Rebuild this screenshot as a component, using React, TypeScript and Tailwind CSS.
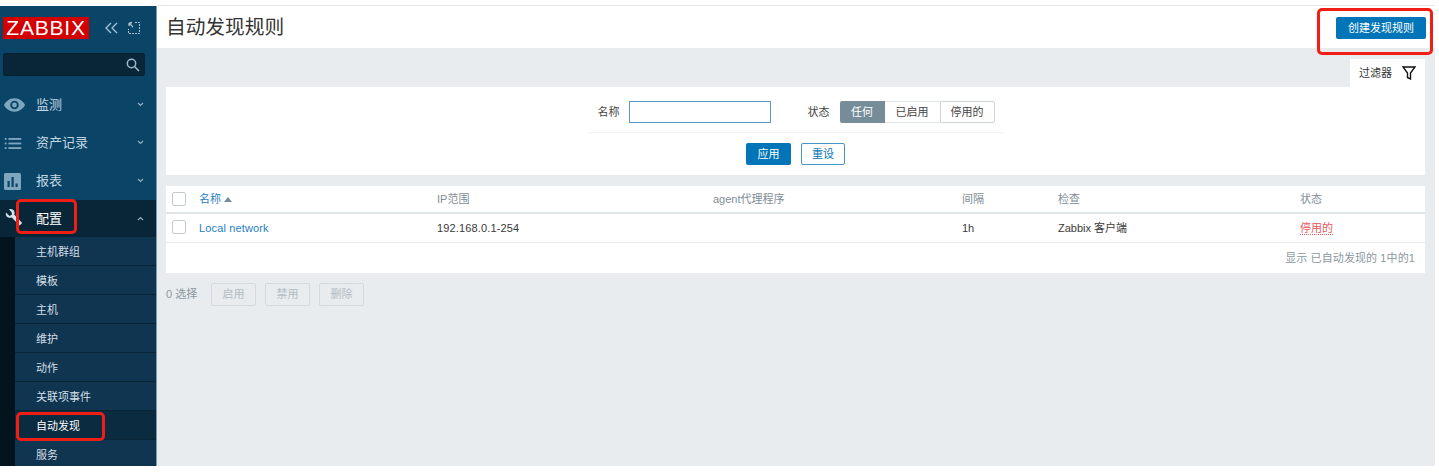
import React from "react";

const FONT = "font-['Liberation_Sans','Noto_Sans_CJK_SC',sans-serif]";

const topMenu = [
  { label: "监测", icon: "eye" },
  { label: "资产记录", icon: "list" },
  { label: "报表", icon: "chart" },
];

const subMenu = ["主机群组", "模板", "主机", "维护", "动作", "关联项事件", "自动发现", "服务"];

function MenuIcon({ name }: { name: string }) {
  if (name === "eye") {
    return (
      <svg width="21" height="14" viewBox="0 0 22 14" fill="#7fa6bf">
        <path d="M11 0C6 0 2 3 0 7c2 4 6 7 11 7s9-3 11-7c-2-4-6-7-11-7zm0 11.5A4.5 4.5 0 1 1 11 2.5a4.5 4.5 0 0 1 0 9z" />
        <circle cx="11" cy="7" r="2.5" />
      </svg>
    );
  }
  if (name === "list") {
    return (
      <svg width="18" height="11" viewBox="0 0 18 12" fill="#7fa6bf">
        <rect x="0" y="0" width="2" height="2" />
        <rect x="4" y="0" width="14" height="2" />
        <rect x="0" y="5" width="2" height="2" />
        <rect x="4" y="5" width="14" height="2" />
        <rect x="0" y="10" width="2" height="2" />
        <rect x="4" y="10" width="14" height="2" />
      </svg>
    );
  }
  return (
    <svg width="17" height="17" viewBox="0 0 17 17">
      <rect width="17" height="17" rx="1.5" fill="#7fa6bf" />
      <rect x="3.5" y="8" width="2.2" height="6" fill="#0a4568" />
      <rect x="7.5" y="4" width="2.2" height="10" fill="#0a4568" />
      <rect x="11.5" y="10.5" width="2.2" height="3.5" fill="#0a4568" />
    </svg>
  );
}

function Chevron({ up }: { up?: boolean }) {
  return (
    <svg width="7" height="5" viewBox="0 0 7 5" fill="none" stroke="#8fb0c6" strokeWidth="1.2">
      <path d={up ? "M1 4l2.5-2.5L6 4" : "M1 1l2.5 2.5L6 1"} />
    </svg>
  );
}

function Sidebar() {
  return (
    <aside className="w-[157px] mt-[1px] shrink-0 bg-[#0a4568] border-r border-[#7d99ad] flex flex-col overflow-hidden">
      <div className="h-[47px] shrink-0 flex items-center pl-[3px] pb-[3px]">
        <div className="w-[86px] h-[22px] bg-[#d40000] text-white text-[21px] leading-[22px] text-center tracking-[0.8px]">
          ZABBIX
        </div>
        <svg className="ml-[16px]" width="13" height="12" viewBox="0 0 13 12" fill="none" stroke="#a9c3d4" strokeWidth="1.3">
          <path d="M6 1L1 6l5 5M12 1L7 6l5 5" />
        </svg>
        <svg className="ml-[10px]" width="12" height="12" viewBox="0 0 12 12" fill="none" stroke="#a9c3d4">
          <path d="M4 .5H1l0 0M7 .5h4.5V11.5H.5V7" strokeDasharray="2 1" />
          <path d="M1 1l4 4M1 1v3M1 1h3" strokeWidth="1.2" />
        </svg>
      </div>
      <div className="mx-[3px] h-[23px] w-[142px] shrink-0 bg-[#082638] rounded-[2px] border border-[#06202f] flex items-center justify-end pr-[4px]">
        <svg width="14" height="14" viewBox="0 0 14 14" fill="none" stroke="#9db8c9" strokeWidth="1.5">
          <circle cx="5.5" cy="5.5" r="4.2" />
          <path d="M8.7 8.7L13 13" />
        </svg>
      </div>

      <nav className="mt-[10px] flex flex-col flex-1 min-h-0">
        {topMenu.map((m) => (
          <div key={m.label} className="h-[38px] shrink-0 flex items-center relative text-[#c4d6e2] text-[13px]">
            <span className="w-[26px] ml-[4px] mr-[6px] flex justify-start">
              <MenuIcon name={m.icon} />
            </span>
            <span>{m.label}</span>
            <span className="absolute left-[137px] top-[16px]">
              <Chevron />
            </span>
          </div>
        ))}
        <div className="h-[37px] shrink-0 bg-[#082638] flex items-center relative text-white text-[13px]">
          <svg className="absolute left-[5px] top-[9px]" width="18" height="18" viewBox="0 0 18 18" fill="#d5e2ea">
            <path d="M1 3.5L4.5 7 7 5.5 6.5 3 4 .5C6-.5 9 .5 9.5 3c.2 1 0 2-.3 2.6l8 8.4-2.6 2.6-7.9-8.2C4.5 9 3 8.8 2 7.8.8 6.7.6 5 1 3.5z" />
          </svg>
          <span className="ml-[36px]">配置</span>
          <span className="absolute left-[137px] top-[16px]">
            <Chevron up />
          </span>
        </div>
        <div className="flex-1 min-h-0 flex">
          <div className="w-[15px] bg-[#04141e]" />
          <div className="flex-1 bg-[#0f3550]">
            {subMenu.map((s) => (
              <div
                key={s}
                className={
                  "h-[29px] pl-[21px] leading-[30px] text-[11px] border-b border-[#0a2536] " +
                  (s === "自动发现" ? "bg-[#0a2b40] text-white" : "text-[#d3dfe7]")
                }
              >
                {s}
              </div>
            ))}
          </div>
        </div>
      </nav>
    </aside>
  );
}

function FilterPanel() {
  return (
    <div className="ml-[9px] mr-[10px]">
      <div className="flex justify-end mt-[11px]">
        <div className="w-[75px] h-[28px] bg-white flex items-center pl-[9px] text-[11px] text-[#333]">
          过滤器
          <svg className="ml-[10px]" width="14" height="14" viewBox="0 0 14 14" fill="none" stroke="#111" strokeWidth="1.4">
            <path d="M1 1h12L8.5 7v6l-3-1.5V7z" />
          </svg>
        </div>
      </div>
      <div className="h-[88px] bg-white flex flex-col items-center">
        <div className="w-[416px] h-[46px] border-b border-[#eef0f2] flex items-start pt-[14px] pl-[10px] text-[11px] text-[#444]">
          <span className="leading-[22px] w-[31px]">名称</span>
          <div className="w-[142px] h-[22px] border border-[#5a96bd] bg-white" />
          <span className="leading-[22px] ml-[37px] w-[32px]">状态</span>
          <div className="flex h-[22px] leading-[20px] text-center">
            <div className="w-[45px] leading-[22px] bg-[#768d99] text-white rounded-l-[2px]">任何</div>
            <div className="w-[55px] border-y border-[#dfe4e7]">已启用</div>
            <div className="w-[55px] border border-[#cfd6da] rounded-r-[2px]">停用的</div>
          </div>
        </div>
        <div className="flex gap-[10px] mt-[10px]">
          <div className="w-[45px] h-[22px] leading-[22px] text-center bg-[#0275b8] text-white text-[11px] rounded-[2px]">应用</div>
          <div className="w-[44px] h-[22px] leading-[20px] text-center border border-[#4796c4] text-[#0275b8] text-[11px] rounded-[2px]">重设</div>
        </div>
      </div>
    </div>
  );
}

function Checkbox() {
  return <span className="absolute left-[6px] top-[6px] w-[14px] h-[14px] bg-white border border-[#c5ccd1] rounded-[2px]" />;
}

const COLS = "grid grid-cols-[238px_276px_249px_96px_242px_1fr] pl-[33px] relative";

function DiscoveryTable() {
  return (
    <div className="ml-[9px] mr-[10px] mt-[11px] bg-white text-[11px]">
      <div className={COLS + " h-[28px] leading-[27px] border-b-2 border-[#dfe4e7] text-[#7f8d97]"}>
        <Checkbox />
        <div className="text-[#1f7fbf] flex items-center gap-[3px]">
          名称
          <span className="w-0 h-0 border-x-[4px] border-x-transparent border-b-[5px] border-b-[#768d99]" />
        </div>
        <div>IP范围</div>
        <div>agent代理程序</div>
        <div>间隔</div>
        <div>检查</div>
        <div>状态</div>
      </div>
      <div className={COLS + " h-[29px] leading-[28px] border-b border-[#e6eaec] text-[#3a3a3a]"}>
        <Checkbox />
        <div className="text-[#1f7fbf] tracking-[0.14px]">Local network</div>
        <div className="tracking-[0.14px]">192.168.0.1-254</div>
        <div />
        <div>1h</div>
        <div>Zabbix 客户端</div>
        <div>
          <span className="text-[#e45959] border-b border-dotted border-[#e45959]">停用的</span>
        </div>
      </div>
      <div className="h-[30px] leading-[30px] text-right pr-[10px] text-[#8a97a0] tracking-[0.1px]">显示 已自动发现的 1中的1</div>
    </div>
  );
}

function ActionBar() {
  return (
    <div className="ml-[9px] mt-[10px] flex items-center text-[11px] text-[#8a97a0]">
      <span className="w-[45px]">0 选择</span>
      {["启用", "禁用", "删除"].map((b) => (
        <div key={b} className="w-[45px] h-[23px] leading-[21px] mr-[9px] text-center border border-[#d3d9dc] text-[#b3bcc2] rounded-[2px]">
          {b}
        </div>
      ))}
    </div>
  );
}

function Callout({ className }: { className: string }) {
  return <div className={"absolute border-[3px] border-[#f01e14] rounded-[5px] " + className} />;
}

export default function App() {
  return (
    <div className={"relative w-[1439px] h-[476px] bg-white overflow-hidden pt-[5px] " + FONT}>
      <div className="w-[1435px] h-[461px] flex">
        <Sidebar />
        <main className="flex-1 bg-[#e9ecef] flex flex-col">
          <header className="h-[43px] bg-white border-t border-[#e4e6e8] flex items-center justify-between pl-[9px] pr-[9px]">
            <h1 className="text-[19.7px] mt-[2px] text-[#333] font-normal">自动发现规则</h1>
            <div className="w-[90px] h-[22px] leading-[22px] mt-[2px] text-center bg-[#0275b8] text-white text-[11px] rounded-[2px]">创建发现规则</div>
          </header>
          <FilterPanel />
          <DiscoveryTable />
          <ActionBar />
        </main>
      </div>
      <Callout className="left-[1317px] top-[8px] w-[116px] h-[47px]" />
      <Callout className="left-[16px] top-[199px] w-[61px] h-[35px]" />
      <Callout className="left-[16px] top-[412px] w-[89px] h-[29px]" />
    </div>
  );
}
